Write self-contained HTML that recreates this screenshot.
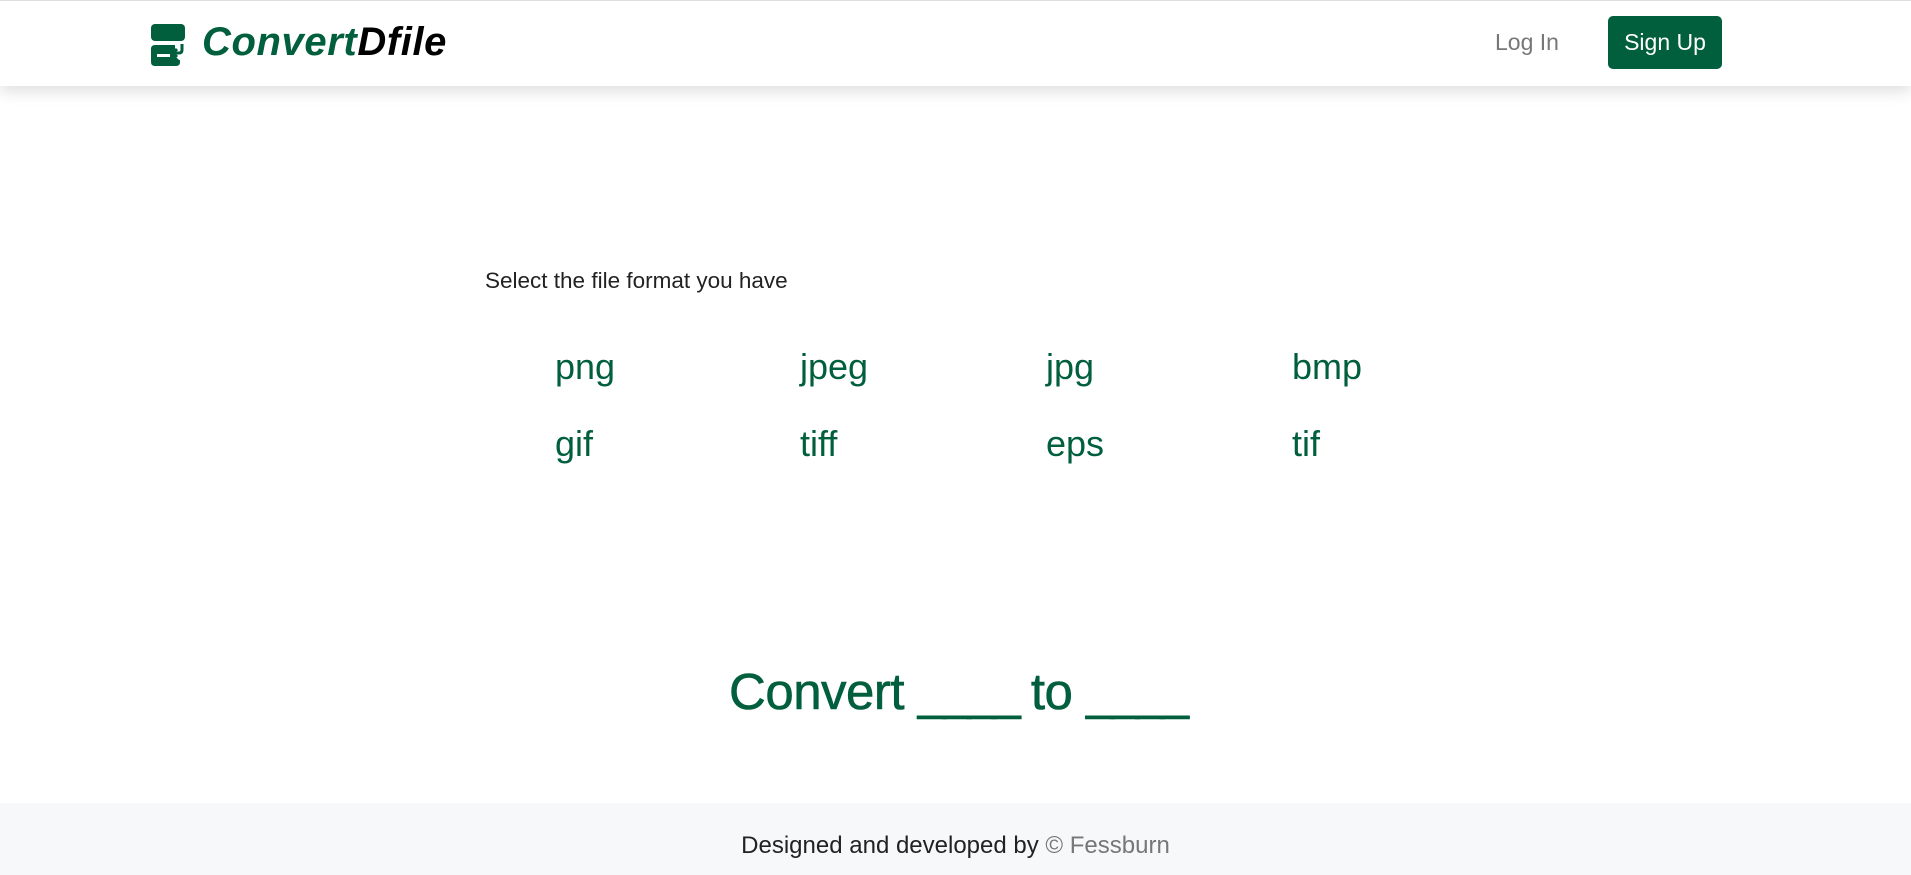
<!DOCTYPE html>
<html><head><meta charset="utf-8"><style>
body{margin:0;width:1911px;height:875px;overflow:hidden;background:#fff;font-family:"Liberation Sans",sans-serif;position:relative}
.hdr{position:absolute;left:0;top:0;width:1911px;height:85px;border-top:1px solid #ddd;box-shadow:0 6px 14px rgba(0,0,0,.12);background:#fff}
.logo{position:absolute;left:202px;top:19px;font-size:40px;font-weight:bold;font-style:italic;color:#025f3e;letter-spacing:0.6px}
.logo span{color:#000}
.login{position:absolute;left:1495px;top:28px;font-size:23px;color:#777}
.btn{position:absolute;left:1608px;top:15px;width:114px;height:53px;background:#025f3e;border-radius:5px;color:#fff;font-size:23px;line-height:53px;text-align:center}
.sel{position:absolute;left:485px;top:268px;font-size:22.5px;color:#222}
.f{position:absolute;font-size:36px;color:#025f3e}
.conv{position:absolute;left:729px;top:662px;font-size:51px;color:#025f3e;white-space:nowrap;-webkit-text-stroke:0.6px #025f3e;letter-spacing:-0.5px}
.u{letter-spacing:-3.5px}
.foot{position:absolute;left:0;top:803px;width:1911px;height:72px;background:#f7f8fa}
.ft{position:absolute;left:0;width:1911px;top:832px;text-align:center;font-size:24px;color:#222}
.ft span{color:#777}
</style></head><body>
<div class="hdr">
<svg style="position:absolute;left:150px;top:22px" width="36" height="44" viewBox="0 0 36 44">
<rect x="1" y="1" width="34" height="17" rx="4" fill="#025f3e"/>
<path d="M5 22 H25 L25 26 L22 30 L29 37 L30 37 V39 Q30 43 26 43 H5 Q1 43 1 39 V26 Q1 22 5 22Z" fill="#025f3e"/>
<rect x="7" y="31" width="13" height="3" fill="#fff"/>
<path d="M32 21 V27 Q32 30 29 30 H24 M27 26 L23 30 L27 34" stroke="#025f3e" stroke-width="3" fill="none"/>
</svg>
<div class="logo">Convert<span>Dfile</span></div>
<div class="login">Log In</div>
<div class="btn">Sign Up</div>
</div>
<div class="sel">Select the file format you have</div>
<div class="f" style="left:555px;top:346px">png</div>
<div class="f" style="left:800px;top:346px">jpeg</div>
<div class="f" style="left:1046px;top:346px">jpg</div>
<div class="f" style="left:1292px;top:346px">bmp</div>
<div class="f" style="left:555px;top:423px">gif</div>
<div class="f" style="left:800px;top:423px">tiff</div>
<div class="f" style="left:1046px;top:423px">eps</div>
<div class="f" style="left:1292px;top:423px">tif</div>
<div class="conv">Convert <span class="u">____</span> to <span class="u">____</span></div>
<div class="foot"></div>
<div class="ft">Designed and developed by <span>© Fessburn</span></div>
</body></html>
